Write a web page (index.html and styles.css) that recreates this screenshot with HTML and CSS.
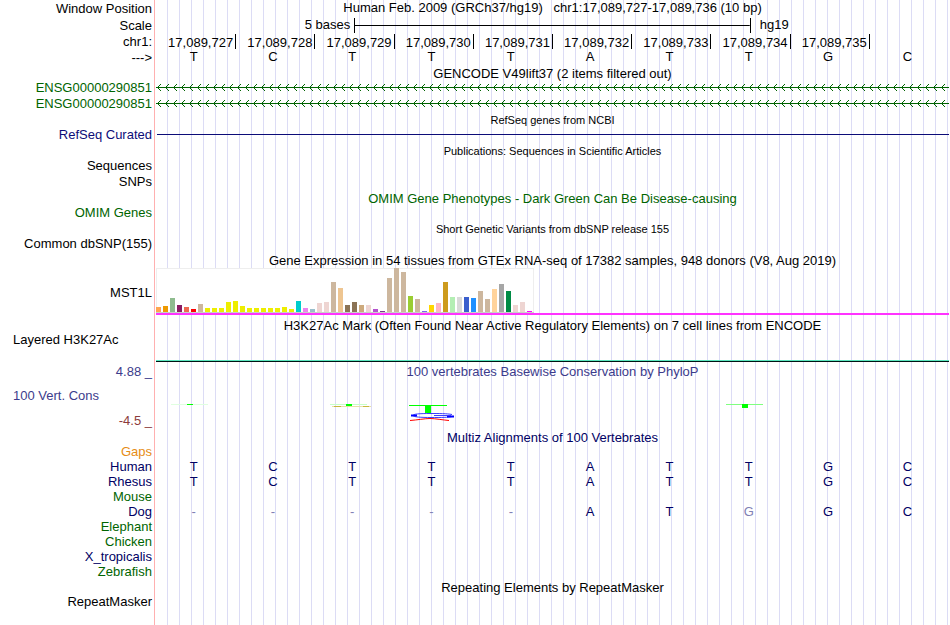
FILE: index.html
```html
<!DOCTYPE html>
<html lang="en">

<head>
    <meta charset="UTF-8">
    <meta name="viewport" content="width=device-width, initial-scale=1.0">
    <title>Human chr1:17,089,727-17,089,736</title>
    <link rel="stylesheet" href="styles.css">
</head>

<body>
    <main class="browser">
        <!-- Ruler -->
        <div class="row ruler">
            <div class="label">Window Position</div>
            <div class="data title position">Human Feb. 2009 (GRCh37/hg19) &nbsp; chr1:17,089,727-17,089,736 (10 bp)</div>
        </div>
        <div class="row ruler">
            <div class="label">Scale</div>
            <div class="data scale">
                <span class="scale-size">5 bases</span>
                <span class="scale-bar"></span>
                <span class="scale-db">hg19</span>
            </div>
        </div>
        <div class="row item">
            <div class="label">chr1:</div>
            <div class="data">
                <div class="ticks">
                    <span>17,089,727</span><span>17,089,728</span><span>17,089,729</span><span>17,089,730</span><span>17,089,731</span><span>17,089,732</span><span>17,089,733</span><span>17,089,734</span><span>17,089,735</span>
                </div>
            </div>
        </div>
        <div class="row short">
            <div class="label">---&gt;</div>
            <div class="data">
                <div class="bases reference">
                    <span>T</span><span>C</span><span>T</span><span>T</span><span>T</span><span>A</span><span>T</span><span>T</span><span>G</span><span>C</span>
                </div>
            </div>
        </div>

        <!-- GENCODE -->
        <div class="row short">
            <div class="label"></div>
            <div class="data title">GENCODE V49lift37 (2 items filtered out)</div>
        </div>
        <div class="row item">
            <div class="label green">ENSG00000290851</div>
            <div class="data">
                <svg class="gene" height="16" shape-rendering="crispEdges">
                    <defs>
                        <pattern id="arrows" width="8" height="16" patternUnits="userSpaceOnUse">
                            <path d="M0 7H8V8H0ZM2 6H3V7H2ZM3 5H4V6H3ZM4 4H5V5H4ZM2 8H3V9H2ZM3 9H4V10H3ZM4 10H5V11H4Z" fill="#006400" />
                        </pattern>
                    </defs>
                    <rect width="100%" height="16" fill="url(#arrows)" />
                </svg>
            </div>
        </div>
        <div class="row item">
            <div class="label green">ENSG00000290851</div>
            <div class="data">
                <svg class="gene" height="16" shape-rendering="crispEdges">
                    <rect width="100%" height="16" fill="url(#arrows)" />
                </svg>
            </div>
        </div>

        <!-- RefSeq -->
        <div class="row short">
            <div class="label"></div>
            <div class="data title small">RefSeq genes from NCBI</div>
        </div>
        <div class="row item">
            <div class="label blue">RefSeq Curated</div>
            <div class="data">
                <div class="refseq-line"></div>
            </div>
        </div>

        <!-- Publications -->
        <div class="row short">
            <div class="label"></div>
            <div class="data title small">Publications: Sequences in Scientific Articles</div>
        </div>
        <div class="row item">
            <div class="label">Sequences</div>
            <div class="data"></div>
        </div>
        <div class="row item">
            <div class="label">SNPs</div>
            <div class="data"></div>
        </div>

        <!-- OMIM -->
        <div class="row short">
            <div class="label"></div>
            <div class="data title green">OMIM Gene Phenotypes - Dark Green Can Be Disease-causing</div>
        </div>
        <div class="row item">
            <div class="label green">OMIM Genes</div>
            <div class="data"></div>
        </div>

        <!-- dbSNP -->
        <div class="row short">
            <div class="label"></div>
            <div class="data title small">Short Genetic Variants from dbSNP release 155</div>
        </div>
        <div class="row item">
            <div class="label">Common dbSNP(155)</div>
            <div class="data"></div>
        </div>

        <!-- GTEx -->
        <div class="row short">
            <div class="label"></div>
            <div class="data title">Gene Expression in 54 tissues from GTEx RNA-seq of 17382 samples, 948 donors (V8, Aug 2019)</div>
        </div>
        <div class="row gtex">
            <div class="label">MST1L</div>
            <div class="data">
                <div class="gtex-model">
                    <svg width="378" height="45" shape-rendering="crispEdges">
                        <rect width="378" height="45" fill="#eeeeee" />
                        <rect x="1" y="1" width="376" height="43" fill="#ffffff" />
                        <rect y="44" width="378" height="1" fill="#c8d2c8" />
                        <rect x="0" y="39" width="5" height="5" fill="#ffa54f" />
                        <rect x="7" y="38" width="5" height="6" fill="#ee9a00" />
                        <rect x="14" y="30" width="5" height="14" fill="#8fbc8f" />
                        <rect x="21" y="37" width="5" height="7" fill="#8b1c62" />
                        <rect x="28" y="39" width="5" height="5" fill="#ee6a50" />
                        <rect x="35" y="41" width="5" height="3" fill="#ff0000" />
                        <rect x="42" y="36" width="5" height="8" fill="#cdb79e" />
                        <rect x="49" y="40" width="5" height="4" fill="#eeee00" />
                        <rect x="56" y="40" width="5" height="4" fill="#eeee00" />
                        <rect x="63" y="40" width="5" height="4" fill="#eeee00" />
                        <rect x="70" y="34" width="5" height="10" fill="#eeee00" />
                        <rect x="77" y="33" width="5" height="11" fill="#eeee00" />
                        <rect x="84" y="38" width="5" height="6" fill="#eeee00" />
                        <rect x="91" y="40" width="5" height="4" fill="#eeee00" />
                        <rect x="98" y="40" width="5" height="4" fill="#eeee00" />
                        <rect x="105" y="40" width="5" height="4" fill="#eeee00" />
                        <rect x="112" y="40" width="5" height="4" fill="#eeee00" />
                        <rect x="119" y="40" width="5" height="4" fill="#eeee00" />
                        <rect x="126" y="39" width="5" height="5" fill="#eeee00" />
                        <rect x="133" y="41" width="5" height="3" fill="#eeee00" />
                        <rect x="140" y="33" width="5" height="11" fill="#00cdcd" />
                        <rect x="147" y="40" width="5" height="4" fill="#ee82ee" />
                        <rect x="154" y="41" width="5" height="3" fill="#9ac0cd" />
                        <rect x="161" y="35" width="5" height="9" fill="#eed5d2" />
                        <rect x="168" y="34" width="5" height="10" fill="#eed5d2" />
                        <rect x="175" y="14" width="5" height="30" fill="#cdb79e" />
                        <rect x="182" y="20" width="5" height="24" fill="#eec591" />
                        <rect x="189" y="37" width="5" height="7" fill="#8b7355" />
                        <rect x="196" y="34" width="5" height="10" fill="#8b7355" />
                        <rect x="203" y="37" width="5" height="7" fill="#cdaa7d" />
                        <rect x="210" y="37" width="5" height="7" fill="#eed5d2" />
                        <rect x="217" y="41" width="5" height="3" fill="#b452cd" />
                        <rect x="224" y="43" width="5" height="1" fill="#7a378b" />
                        <rect x="231" y="10" width="5" height="34" fill="#cdb79e" />
                        <rect x="238" y="0" width="5" height="44" fill="#cdb79e" />
                        <rect x="245" y="4" width="5" height="40" fill="#cdb79e" />
                        <rect x="252" y="28" width="5" height="16" fill="#9acd32" />
                        <rect x="259" y="31" width="5" height="13" fill="#cdb79e" />
                        <rect x="266" y="43" width="5" height="1" fill="#7a67ee" />
                        <rect x="273" y="37" width="5" height="7" fill="#ffd700" />
                        <rect x="280" y="35" width="5" height="9" fill="#ffb6c1" />
                        <rect x="287" y="14" width="5" height="30" fill="#cd9b1d" />
                        <rect x="294" y="29" width="5" height="15" fill="#b4eeb4" />
                        <rect x="301" y="29" width="5" height="15" fill="#d9d9d9" />
                        <rect x="308" y="29" width="5" height="15" fill="#3a5fcd" />
                        <rect x="315" y="30" width="5" height="14" fill="#1e90ff" />
                        <rect x="322" y="23" width="5" height="21" fill="#cdb79e" />
                        <rect x="329" y="31" width="5" height="13" fill="#cdb79e" />
                        <rect x="336" y="21" width="5" height="23" fill="#ffd39b" />
                        <rect x="343" y="16" width="5" height="28" fill="#a6a6a6" />
                        <rect x="350" y="23" width="5" height="21" fill="#008b45" />
                        <rect x="357" y="37" width="5" height="7" fill="#eed5d2" />
                        <rect x="364" y="34" width="5" height="10" fill="#eed5d2" />
                        <rect x="371" y="43" width="5" height="1" fill="#ff00ff" />
                    </svg>
                </div>
            </div>
        </div>

        <!-- H3K27Ac -->
        <div class="row short">
            <div class="label"></div>
            <div class="data title">H3K27Ac Mark (Often Found Near Active Regulatory Elements) on 7 cell lines from ENCODE</div>
        </div>
        <div class="row h3k">
            <div class="label left">Layered H3K27Ac</div>
            <div class="data">
                <div class="h3k-signal"></div>
            </div>
        </div>

        <!-- Conservation -->
        <div class="row short">
            <div class="label cons-max violet">4.88 _</div>
            <div class="data title violet">100 vertebrates Basewise Conservation by PhyloP</div>
        </div>
        <div class="row cons">
            <div class="label cons-label">
                <span class="left violet">100 Vert. Cons</span>
                <span class="red">-4.5 _</span>
            </div>
            <div class="data">
                <div class="bases logos">
                    <svg width="48" height="22">
                        <rect x="0" y="4" width="37" height="1" fill="#e0ffe0" />
                        <rect x="16" y="4" width="6" height="1" fill="#00ff00" />
                    </svg>
                    <span></span>
                    <svg width="48" height="22">
                        <rect x="0" y="4" width="37" height="1" fill="#c8ffc8" />
                        <rect x="16" y="4" width="6" height="2" fill="#00ff00" />
                        <path d="M2 6.5H41" stroke="#e6e0a8" />
                        <path d="M4 6.5H11M33 6.5H39" stroke="#c8b83c" />
                    </svg>
                    <svg width="48" height="22">
                        <rect x="0" y="5" width="38" height="1" fill="#00ff00" />
                        <rect x="16" y="5" width="6" height="8" fill="#00ff00" />
                        <path d="M43 14.5C38 13.5 30 13.5 22 13.5C10 13.5 4 14 4 15.5C4 17 12 17.5 22 17.5C32 17.5 40 17.5 43 16.5" fill="none" stroke="#3c3cff" />
                        <path d="M2 15.5H8M38 16.5H45" stroke="#0000ff" stroke-width="2" />
                        <path d="M25 15.5H42" stroke="#3c3cff" />
                        <path d="M1 20.5C8 20 16 18.5 21 18.5S34 20 40 20.5" fill="none" stroke="#ff0000" />
                    </svg>
                    <span></span><span></span><span></span>
                    <svg width="48" height="22">
                        <rect x="0" y="4" width="37" height="1" fill="#80ff80" />
                        <rect x="16" y="4" width="6" height="4" fill="#00ff00" />
                    </svg>
                </div>
            </div>
        </div>

        <!-- Multiz -->
        <div class="row short">
            <div class="label"></div>
            <div class="data title navy">Multiz Alignments of 100 Vertebrates</div>
        </div>
        <div class="row short">
            <div class="label orange">Gaps</div>
            <div class="data"></div>
        </div>
        <div class="row short">
            <div class="label navy">Human</div>
            <div class="data">
                <div class="bases navy">
                    <span>T</span><span>C</span><span>T</span><span>T</span><span>T</span><span>A</span><span>T</span><span>T</span><span>G</span><span>C</span>
                </div>
            </div>
        </div>
        <div class="row short">
            <div class="label navy">Rhesus</div>
            <div class="data">
                <div class="bases navy">
                    <span>T</span><span>C</span><span>T</span><span>T</span><span>T</span><span>A</span><span>T</span><span>T</span><span>G</span><span>C</span>
                </div>
            </div>
        </div>
        <div class="row short">
            <div class="label green">Mouse</div>
            <div class="data"></div>
        </div>
        <div class="row short">
            <div class="label navy">Dog</div>
            <div class="data">
                <div class="bases navy">
                    <span class="pale">-</span><span class="pale">-</span><span class="pale">-</span><span class="pale">-</span><span class="pale">-</span><span>A</span><span>T</span><span class="pale">G</span><span>G</span><span>C</span>
                </div>
            </div>
        </div>
        <div class="row short">
            <div class="label green">Elephant</div>
            <div class="data"></div>
        </div>
        <div class="row short">
            <div class="label green">Chicken</div>
            <div class="data"></div>
        </div>
        <div class="row short">
            <div class="label navy">X_tropicalis</div>
            <div class="data"></div>
        </div>
        <div class="row short">
            <div class="label green">Zebrafish</div>
            <div class="data"></div>
        </div>

        <!-- RepeatMasker -->
        <div class="row short">
            <div class="label"></div>
            <div class="data title">Repeating Elements by RepeatMasker</div>
        </div>
        <div class="row short">
            <div class="label">RepeatMasker</div>
            <div class="data"></div>
        </div>
        <div class="row rest">
            <div class="label"></div>
            <div class="data"></div>
        </div>
    </main>
</body>

</html>
```

FILE: styles.css
```css
body {
    margin: 0;
    background-color: #ffffff;
    color: #000000;
    font-family: "Liberation Sans", Arial, Helvetica, sans-serif;
    font-size: 13px;
}

svg {
    display: block;
}

.browser {
    display: flex;
    flex-direction: column;
    min-height: 100vh;
    padding-right: 1px;
}

/* One row = label column + data column */
.row {
    display: grid;
    grid-template-columns: 154px minmax(0, 1fr);
    line-height: 16px;
    white-space: nowrap;
}

.ruler {
    grid-template-rows: 17px;
    line-height: 18px;
}

.item {
    grid-template-rows: 16px;
}

.short {
    grid-template-rows: 15px;
    line-height: 15px;
}

.rest {
    flex: 1;
}

.label {
    padding-right: 2px;
    text-align: right;
}

.left {
    padding-left: 13px;
    text-align: left;
}

/* Blue guidelines every 12px */
.data {
    padding-left: 1px;
    border-left: 1px solid #ffb0b0;
    background-image: linear-gradient(to right, transparent 11px, #dcdcf5 11px);
    background-size: 12px 100%;
    background-origin: content-box;
    background-clip: content-box;
}

.title {
    line-height: 17px;
    text-align: center;
}

.position {
    line-height: 15px;
}

.small {
    font-size: 11px;
}

.green {
    color: #006400;
}

.blue {
    color: #0c0c78;
}

.navy {
    color: #000064;
}

.violet {
    color: #3c3c8c;
}

.red {
    color: #8c3c3c;
}

.orange {
    color: #e68c14;
}

.pale {
    color: #8080b4;
}

/* Ruler */
.scale {
    display: flex;
    line-height: 16px;
}

.scale-size {
    box-sizing: border-box;
    width: 25%;
    padding-right: 4px;
    text-align: right;
}

.scale-bar {
    box-sizing: border-box;
    width: 50%;
    height: 15px;
    margin-top: 1px;
    border-left: 1px solid #000000;
    border-right: 1px solid #000000;
    background: linear-gradient(#000000, #000000) center / 100% 1px no-repeat;
}

.scale-db {
    padding-left: 9px;
}

.ticks {
    display: grid;
    grid-template-columns: repeat(10, 1fr);
    padding-left: 1px;
    line-height: 17px;
}

.ticks span {
    height: 15px;
    padding-right: 2px;
    border-right: 1px solid #000000;
    text-align: right;
}

.bases {
    display: grid;
    grid-template-columns: repeat(10, 1fr);
    margin-left: -2px;
    margin-right: 2px;
    text-align: center;
}

.reference {
    line-height: 13px;
}

/* Tracks */
.gene {
    width: 100%;
}

.refseq-line {
    height: 7px;
    margin-left: 1px;
    border-bottom: 1px solid #0c0c78;
}

.gtex {
    grid-template-rows: 50px;
    line-height: 52px;
}

.gtex-model {
    margin-top: 1px;
    border-bottom: 2px solid #ff33ff;
}

.h3k {
    grid-template-rows: 31px;
}

.h3k-signal {
    height: 28px;
    border-top: 0;
    border-bottom: 2px solid #001414;
    border-image: linear-gradient(#5ae6be 50%, #001414 50%) 0 0 2 0;
    border-image: linear-gradient(to bottom, transparent 28px, #5ae6be 28px, #5ae6be 29px, #001414 29px) 0 0 2 0;
}

.cons {
    min-height: 51px;
}

.cons-max {
    line-height: 17px;
}

.cons-label {
    display: flex;
    flex-direction: column;
    justify-content: flex-end;
    gap: 9px;
}

.logos {
    padding-top: 22px;
}

.logos svg {
    margin-left: 17px;
}
```
